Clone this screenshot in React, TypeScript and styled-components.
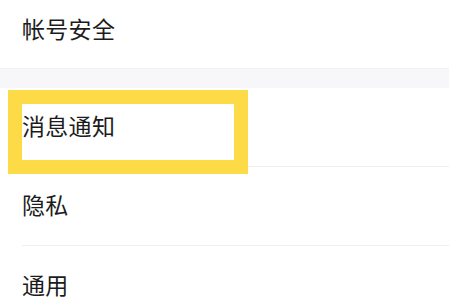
import React from 'react';
import styled, { createGlobalStyle } from 'styled-components';

const GlobalStyle = createGlobalStyle`
  html, body {
    margin: 0;
    padding: 0;
    background: #ffffff;
    overflow: hidden;
  }
  body {
    font-family: "Noto Sans CJK SC", "Noto Sans", sans-serif;
  }
`;

// 화면 전체 (살짝 스크롤된 상태)
const Screen = styled.div`
  position: relative;
  width: 449px;
  height: 301px;
  overflow: hidden;
  background: #ffffff;
`;

const List = styled.div`
  display: flex;
  flex-direction: column;
  margin-top: -8px;
`;

const Group = styled.div`
  display: flex;
  flex-direction: column;
  background: #ffffff;
`;

const GroupGap = styled.div`
  height: 20px;
  background: #f7f7f9;
  border-top: 1px solid #f2f2f4;
  box-sizing: border-box;
`;

const Row = styled.div<{ $h?: number; $divider?: boolean }>`
  display: flex;
  align-items: center;
  height: ${(p) => p.$h ?? 78}px;
  margin-left: 22px;
  border-bottom: ${(p) => (p.$divider ? '1px solid #efefef' : 'none')};
  flex-shrink: 0;
`;

const Label = styled.span`
  font-size: 23px;
  color: #1c1c1c;
  letter-spacing: 0.3px;
  line-height: 1;
  padding-bottom: 4px;
`;

// 노란 강조 박스 (주석 오버레이)
const Highlight = styled.div`
  position: absolute;
  left: 8px;
  top: 90px;
  width: 240px;
  height: 84px;
  border: 14px solid #fcdb47;
  box-sizing: border-box;
  pointer-events: none;
`;

const App = () => {
  return (
    <>
      <GlobalStyle />
      <Screen>
        <List>
          <Group>
            <Row $h={76}>
              <Label>帐号安全</Label>
            </Row>
          </Group>
          <GroupGap />
          <Group>
            <Row $divider>
              <Label>消息通知</Label>
            </Row>
            <Row $divider>
              <Label>隐私</Label>
            </Row>
            <Row $h={80}>
              <Label>通用</Label>
            </Row>
          </Group>
        </List>
        <Highlight />
      </Screen>
    </>
  );
};

export default App;
